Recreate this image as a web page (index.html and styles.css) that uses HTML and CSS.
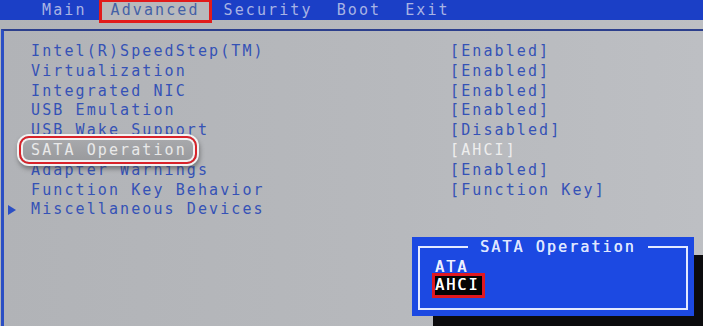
FILE: index.html
```html
<!DOCTYPE html>
<html>
<head>
<meta charset="utf-8">
<link rel="stylesheet" href="styles.css">
</head>
<body>
<div class="screen">
  <header class="menubar">
    <span class="tab">Main</span>
    <span class="tab active">Advanced</span>
    <span class="tab">Security</span>
    <span class="tab">Boot</span>
    <span class="tab">Exit</span>
  </header>
  <section class="panel">
    <div class="row"><span class="label">Intel(R)SpeedStep(TM)</span><span class="value">[Enabled]</span></div>
    <div class="row"><span class="label">Virtualization</span><span class="value">[Enabled]</span></div>
    <div class="row"><span class="label">Integrated NIC</span><span class="value">[Enabled]</span></div>
    <div class="row"><span class="label">USB Emulation</span><span class="value">[Enabled]</span></div>
    <div class="row"><span class="label">USB Wake Support</span><span class="value">[Disabled]</span></div>
    <div class="row selected"><span class="label"><span class="sel-box"></span><span class="sel-text">SATA Operation</span></span><span class="value value-sel">[AHCI]</span></div>
    <div class="row"><span class="label">Adapter Warnings</span><span class="value">[Enabled]</span></div>
    <div class="row"><span class="label">Function Key Behavior</span><span class="value">[Function Key]</span></div>
    <div class="row"><span class="label"><span class="arrow"></span>Miscellaneous Devices</span><span class="value"></span></div>
  </section>
  <div class="popup">
    <div class="frame">
      <div class="opt">ATA</div>
      <div class="opt opt-sel">AHCI</div>
    </div>
    <span class="popup-title">SATA Operation</span>
  </div>
</div>
</body>
</html>
```

FILE: styles.css
```css
html, body {
  margin: 0;
  padding: 0;
}
body {
  background: #b4b6ba;
  font-family: "DejaVu Sans Mono", "Liberation Mono", monospace;
}
.screen {
  position: relative;
  width: 703px;
  height: 326px;
  overflow: hidden;
  background: linear-gradient(90deg, #b1b3b7 0%, #b6b8bc 50%, #bdbfc3 100%);
}
.menubar {
  height: 20px;
  background: #1b3fc6;
  display: flex;
  align-items: flex-start;
  padding-left: 30px;
}
.tab {
  padding: 0 12px;
  color: #a8b3e4;
  font-size: 15px;
  letter-spacing: 2.1px;
  line-height: 21px;
}
.tab.active {
  height: 23px;
  box-sizing: border-box;
  background: #b8b9bc;
  color: #4461a6;
  border: 3px solid #e11b1b;
  border-top-width: 2px;
  padding: 0 9px;
  line-height: 17px;
}
.panel {
  margin: 9px 0 0 1px;
  border-top: 2px solid #2c3f8c;
  border-left: 3px solid #2b4fc4;
  padding: 11px 0 0 27px;
  height: 300px;
}
.row {
  display: grid;
  grid-template-columns: 419px auto;
  font-size: 15px;
  letter-spacing: 2.1px;
  line-height: 19.8px;
  color: #3552b6;
}
.label {
  position: relative;
}
.arrow {
  display: inline-block;
  width: 0;
  height: 0;
  margin-left: -23px;
  margin-right: 15px;
  border-left: 8px solid #2b4fc4;
  border-top: 5px solid transparent;
  border-bottom: 5px solid transparent;
  vertical-align: -1px;
}
.sel-box {
  position: absolute;
  z-index: 1;
  left: -12px;
  top: -5px;
  width: 178px;
  height: 28px;
  box-sizing: border-box;
  border-radius: 10px;
  border: 2px solid #d8232a;
  background: linear-gradient(180deg, #a9aaad 0%, #98999c 100%);
  box-shadow: 0 0 0 2px #f2f2f2, inset 0 0 0 2px #f2f2f2, 1px 3px 4px 2px rgba(60,60,60,0.5);
}
.sel-text {
  position: relative;
  z-index: 2;
  color: #e9e9e9;
}
.value-sel {
  color: #eeeeee;
}
.popup {
  position: absolute;
  left: 412px;
  top: 237px;
  width: 282px;
  height: 79px;
  background: #1c49e2;
  box-shadow: 21px 18px 0 #0b0b0d;
  font-size: 15px;
  letter-spacing: 2.1px;
  color: #eef1ff;
}
.frame {
  position: absolute;
  left: 6px;
  top: 9px;
  right: 6px;
  bottom: 6px;
  border: 2px solid #e4eaff;
  padding: 9px 0 0 15px;
}
.opt {
  line-height: 20px;
  width: fit-content;
  text-shadow: 0.4px 0 0 currentColor;
}
.opt-sel {
  border: 3px solid #e01820;
  background: #050505;
  margin: -4px 0 0 -3px;
  padding-right: 2px;
  line-height: 19px;
  color: #ffffff;
}
.popup-title {
  position: absolute;
  left: 56px;
  top: 0;
  padding: 0 12px;
  line-height: 20px;
  background: #1c49e2;
  color: #dfe6ff;
  text-shadow: 0.4px 0 0 currentColor;
}
```
